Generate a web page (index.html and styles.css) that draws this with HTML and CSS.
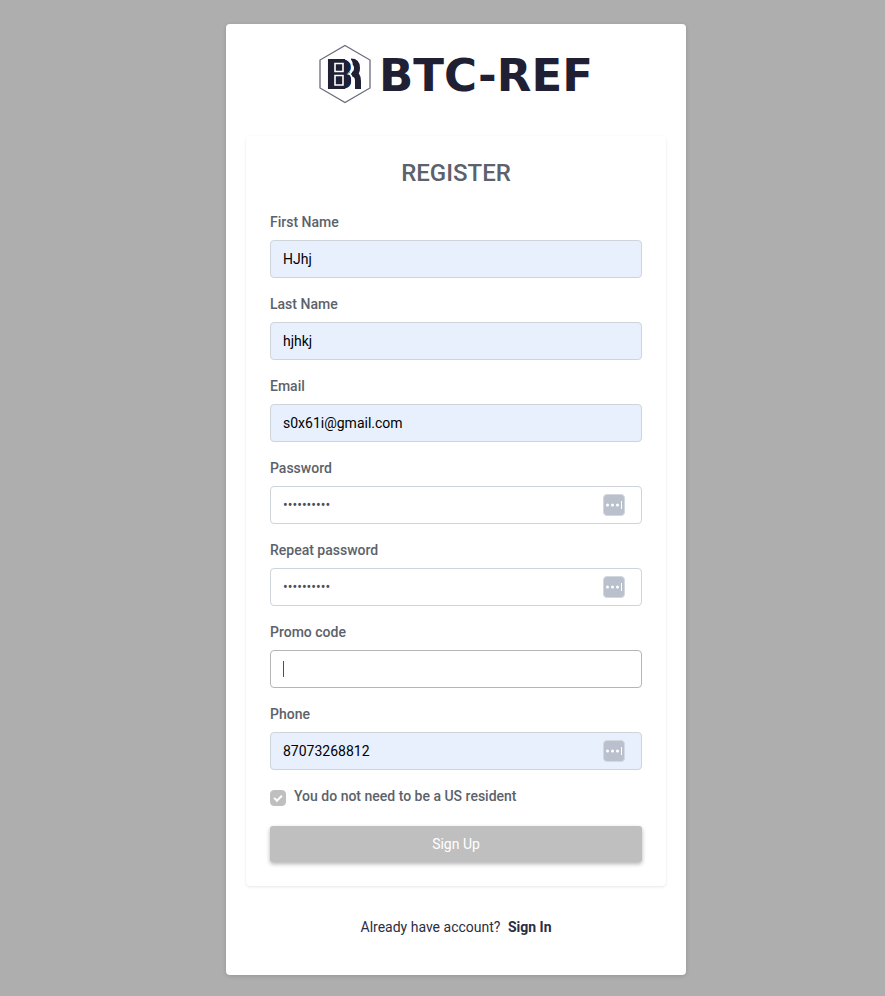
FILE: index.html
```html
<!DOCTYPE html>
<html lang="en">
<head>
    <meta charset="UTF-8">
    <meta name="viewport" content="width=device-width, initial-scale=1.0">
    <title>Register | BTC-REF</title>
    <link rel="stylesheet" href="styles.css">
</head>
<body>
    <main class="page">
        <div class="card">
            <a href="#" class="logo">
                <svg class="logo-mark" viewBox="0 0 52 60" aria-hidden="true">
                    <path d="M26 1.5 51 16v28L26 58.5 1 44V16z" fill="none" stroke="#6b6a7c" stroke-width="1.3"/>
                    <text class="mark-letter" x="7" y="45">B</text>
                    <!-- square corners, inline frames, then the outer ribbon -->
                    <path d="M9 15h17v30H9z" fill="#1f2033"/>
                    <path d="M16 19.500h8v8h-8zM16 31.500h8v9.500h-8z" fill="#1f2033" stroke="#fff" stroke-width="1.600"/>
                    <path d="M26 18h3v24h-3z" fill="#1f2033"/>
                    <path d="M32 17.500q6 0 6 6.500q0 5-3 6q4 1 4 7v8" fill="none" stroke="#1f2033" stroke-width="6"/>
                    <path d="M29 15q4 1 4 6v4q0 4-3 5q3 1 3 5v4q0 4-3 6" fill="none" stroke="#fff" stroke-width="1.600"/>
                </svg>
                <span class="logo-text">BTC-REF</span>
            </a>

            <form class="register-form" id="registerForm">
                <h1>REGISTER</h1>

                <div class="form-group">
                    <label for="firstName">First Name</label>
                    <input type="text" id="firstName" name="firstName" class="form-control filled" value="HJhj">
                </div>

                <div class="form-group">
                    <label for="lastName">Last Name</label>
                    <input type="text" id="lastName" name="lastName" class="form-control filled" value="hjhkj">
                </div>

                <div class="form-group">
                    <label for="email">Email</label>
                    <input type="email" id="email" name="email" class="form-control filled" value="s0x61i@gmail.com">
                </div>

                <div class="form-group">
                    <label for="password">Password</label>
                    <div class="field">
                        <input type="password" id="password" name="password" class="form-control" value="qwerty1234">
                        <svg class="key-icon" viewBox="0 0 22 22" aria-hidden="true">
                            <rect x="0.5" y="0.5" width="21" height="21" rx="3.5" fill="#bac0cc" stroke="#d3d7df"/>
                            <circle cx="4.5" cy="11" r="1.5" fill="#fff"/>
                            <circle cx="9.5" cy="11" r="1.5" fill="#fff"/>
                            <circle cx="14.5" cy="11" r="1.5" fill="#fff"/>
                            <path d="M18.5 7v8" stroke="#fff"/>
                        </svg>
                    </div>
                </div>

                <div class="form-group">
                    <label for="repeatPassword">Repeat password</label>
                    <div class="field">
                        <input type="password" id="repeatPassword" name="repeatPassword" class="form-control" value="qwerty1234">
                        <svg class="key-icon" viewBox="0 0 22 22" aria-hidden="true">
                            <rect x="0.5" y="0.5" width="21" height="21" rx="3.5" fill="#bac0cc" stroke="#d3d7df"/>
                            <circle cx="4.5" cy="11" r="1.5" fill="#fff"/>
                            <circle cx="9.5" cy="11" r="1.5" fill="#fff"/>
                            <circle cx="14.5" cy="11" r="1.5" fill="#fff"/>
                            <path d="M18.5 7v8" stroke="#fff"/>
                        </svg>
                    </div>
                </div>

                <div class="form-group">
                    <label for="promo">Promo code</label>
                    <input type="text" id="promo" name="promo" class="form-control active">
                </div>

                <div class="form-group">
                    <label for="phone">Phone</label>
                    <div class="field">
                        <input type="tel" id="phone" name="phone" class="form-control filled" value="87073268812">
                        <svg class="key-icon" viewBox="0 0 22 22" aria-hidden="true">
                            <rect x="0.5" y="0.5" width="21" height="21" rx="3.5" fill="#bac0cc" stroke="#d3d7df"/>
                            <circle cx="4.5" cy="11" r="1.5" fill="#fff"/>
                            <circle cx="9.5" cy="11" r="1.5" fill="#fff"/>
                            <circle cx="14.5" cy="11" r="1.5" fill="#fff"/>
                            <path d="M18.5 7v8" stroke="#fff"/>
                        </svg>
                    </div>
                </div>

                <div class="form-check">
                    <input type="checkbox" id="resident" name="resident" checked>
                    <label for="resident">You do not need to be a US resident</label>
                </div>

                <button type="submit">Sign Up</button>
            </form>

            <p class="sign-in">Already have account? <a href="#">Sign In</a></p>
        </div>
    </main>
</body>
</html>
```

FILE: styles.css
```css
* {
    box-sizing: border-box;
}

body {
    margin: 0;
    background-color: #aeaeae;
    font-family: Roboto, "Liberation Sans", sans-serif;
    font-size: 14px;
    line-height: 20px;
    color: #5b626b;
}

.page {
    padding: 24px 0 21px 27px;
}

.card {
    max-width: 460px;
    margin: 0 auto;
    padding: 20px 20px 38px;
    background-color: #fff;
    border-radius: 4px;
    box-shadow: 0 1px 4px rgba(0, 0, 0, 0.15);
}

.logo {
    display: flex;
    align-items: center;
    justify-content: center;
    gap: 8px;
    height: 60px;
    margin-bottom: 32px;
    color: #1f2033;
    text-decoration: none;
}

.logo-mark {
    width: 52px;
    height: 60px;
}

.mark-letter {
    font-family: Roboto, sans-serif;
    font-size: 42px;
    font-weight: 900;
    fill: #1f2033;
}

.logo-text {
    padding-top: 4px;
    font-family: "DejaVu Sans", sans-serif;
    font-size: 45px;
    font-weight: bold;
    line-height: 60px;
}

.register-form {
    padding: 24px;
    border-radius: 4px;
    box-shadow: 0 1px 3px rgba(0, 0, 0, 0.1);
}

h1 {
    margin: 0 0 26px;
    font-size: 24px;
    font-weight: 500;
    line-height: 26px;
    text-align: center;
}

.form-group {
    margin-bottom: 16px;
}

label {
    display: block;
    font-weight: 500;
}

.form-group label {
    margin-bottom: 8px;
}

.field {
    position: relative;
}

.form-control {
    display: block;
    width: 100%;
    height: 38px;
    padding: 8px 12px;
    border: 1px solid #ced4da;
    border-radius: 4px;
    background-color: #fff;
    color: #495057;
    font: inherit;
}

.form-control.filled {
    background-color: #e8f0fe;
    color: #000;
}

/* text cursor of the field in use */
.form-control.active {
    border-color: #b5b5b5;
    background: linear-gradient(#495057, #495057) 12px center / 1px 16px no-repeat #fff;
}

.form-control:focus {
    outline: none;
    border-color: #b5b5b5;
}

.key-icon {
    position: absolute;
    top: 8px;
    right: 17px;
    width: 22px;
    height: 22px;
}

.form-check {
    display: flex;
    gap: 8px;
    margin-bottom: 20px;
}

.form-check input {
    appearance: none;
    display: grid;
    place-items: center;
    width: 16px;
    height: 16px;
    margin: 4px 0 0;
    border: 1px solid #bfbfbf;
    border-radius: 4px;
    background-color: #fff;
}

.form-check input:checked {
    background-color: #bfbfbf;
}

.form-check input:checked::after {
    content: "";
    box-sizing: border-box;
    width: 8px;
    height: 5px;
    margin-bottom: 2px;
    border: solid #fff;
    border-width: 0 0 2px 2px;
    transform: rotate(-45deg);
}

button {
    display: block;
    width: 100%;
    height: 36px;
    border: none;
    border-radius: 3px;
    background-color: #bfbfbf;
    box-shadow: 0 2px 4px rgba(0, 0, 0, 0.3);
    color: #fff;
    font: inherit;
    cursor: pointer;
}

button:hover {
    background-color: #b0b0b0;
}

.sign-in {
    margin: 31px 0 0;
    text-align: center;
    color: #2b2d42;
}

.sign-in a {
    margin-left: 4px;
    color: inherit;
    font-weight: bold;
    text-decoration: none;
}
```
